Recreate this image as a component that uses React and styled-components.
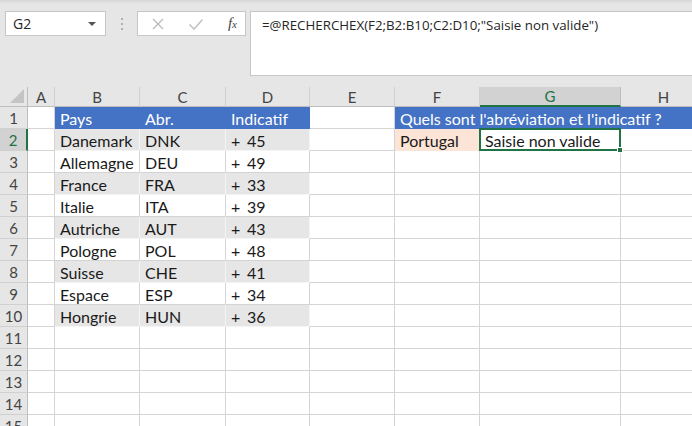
import React from "react";
import styled, { createGlobalStyle } from "styled-components";

const GlobalStyle = createGlobalStyle`
	html, body {
		margin: 0;
		padding: 0;
		width: 692px;
		height: 426px;
		overflow: hidden;
		background: #ffffff;
	}
	* {
		box-sizing: border-box;
	}
`;

const columns = ["A", "B", "C", "D", "E", "F", "G", "H"];
const widths = [28, 27, 85, 86, 84, 85, 85, 141, 86];

const countries = [
	["Danemark", "DNK", "45"],
	["Allemagne", "DEU", "49"],
	["France", "FRA", "33"],
	["Italie", "ITA", "39"],
	["Autriche", "AUT", "43"],
	["Pologne", "POL", "48"],
	["Suisse", "CHE", "41"],
	["Espace", "ESP", "34"],
	["Hongrie", "HUN", "36"],
];

const BLUE = "#4472c4";
const BAND = "#e7e6e6";
const GREEN = "#217346";

function App() {
	const rows = [];

	for (let r = 1; r <= 15; r++) {
		const selectedRow = r === 2;
		rows.push(
			<RowHead key={"h" + r} $active={selectedRow}>
				{r}
			</RowHead>
		);
		// column A
		rows.push(<Cell key={r + "A"} />);

		// B..D : the table
		if (r === 1) {
			rows.push(<Cell key="1B" $fill={BLUE} $line={BLUE} $light>Pays</Cell>);
			rows.push(<Cell key="1C" $fill={BLUE} $line={BLUE} $light>Abr.</Cell>);
			rows.push(<Cell key="1D" $fill={BLUE} $line={BLUE} $light>Indicatif</Cell>);
		} else if (r <= 10) {
			const [pays, abr, code] = countries[r - 2];
			const band = r % 2 === 0;
			const fill = band ? BAND : undefined;
			const line = band ? "#f4f4f4" : undefined;
			rows.push(<Cell key={r + "B"} $fill={fill} $line={line}>{pays}</Cell>);
			rows.push(<Cell key={r + "C"} $fill={fill} $line={line}>{abr}</Cell>);
			rows.push(
				<Cell key={r + "D"} $fill={fill} $line={line}>
					<Plus>+</Plus>
					{code}
				</Cell>
			);
		} else {
			rows.push(<Cell key={r + "B"} />);
			rows.push(<Cell key={r + "C"} />);
			rows.push(<Cell key={r + "D"} />);
		}

		// column E
		rows.push(<Cell key={r + "E"} />);

		// F..H
		if (r === 1) {
			rows.push(
				<Cell key="1F" $fill={BLUE} $line={BLUE} $light $span={3}>
					Quels sont l'abréviation et l'indicatif ?
				</Cell>
			);
		} else if (r === 2) {
			rows.push(<Cell key="2F" $fill="#fce4d6" $line="#fce4d6">Portugal</Cell>);
			rows.push(
				<Selected key="2G">
					Saisie non valide
					<Handle />
				</Selected>
			);
			rows.push(<Cell key="2H" />);
		} else {
			rows.push(<Cell key={r + "F"} />);
			rows.push(<Cell key={r + "G"} />);
			rows.push(<Cell key={r + "H"} />);
		}
	}

	return (
		<>
			<GlobalStyle />
			<Page>
				<Toolbar>
					<NameBox>
						<span>G2</span>
						<Caret />
					</NameBox>
					<Grip>
						<i />
						<i />
						<i />
					</Grip>
					<FuncButtons>
						<svg width="14" height="14" viewBox="0 0 14 14">
							<path
								d="M2 2 L12 12 M12 2 L2 12"
								stroke="#bdbdbd"
								strokeWidth="1.4"
								fill="none"
							/>
						</svg>
						<svg width="16" height="14" viewBox="0 0 16 14">
							<path
								d="M1.5 7.5 L6 12 L14.5 2.5"
								stroke="#c4c4c4"
								strokeWidth="1.6"
								fill="none"
							/>
						</svg>
						<Fx>
							f<sub>x</sub>
						</Fx>
					</FuncButtons>
					<FormulaBox>
						=@RECHERCHEX(F2;B2:B10;C2:D10;"Saisie non valide")
					</FormulaBox>
				</Toolbar>

				<Sheet $cols={widths}>
					<Corner>
						<svg width="14" height="14" viewBox="0 0 14 14">
							<path d="M14 0 L14 14 L0 14 Z" fill="#c4c4c4" />
						</svg>
					</Corner>
					{columns.map((c) => (
						<ColHead key={c} $active={c === "G"}>
							{c}
						</ColHead>
					))}
					{rows}
				</Sheet>
			</Page>
		</>
	);
}

export default App;

// Styled Components

const Page = styled.div`
	width: 692px;
	height: 426px;
	overflow: hidden;
	display: flex;
	flex-direction: column;
	background: #ffffff;
`;

const Toolbar = styled.div`
	display: flex;
	flex-shrink: 0;
	align-items: flex-start;
	height: 87px;
	padding: 11px 0 0 5px;
	background: linear-gradient(#d6d6d6 0px, #e6e6e6 4px, #e6e6e6 100%);
`;

const NameBox = styled.div`
	display: flex;
	align-items: center;
	justify-content: space-between;
	width: 101px;
	height: 25px;
	padding: 0 9px 0 7px;
	background: #ffffff;
	border: 1px solid #c6c6c6;
	font-family: "Open Sans", "Noto Sans", sans-serif;
	font-size: 14px;
	color: #262626;
`;

const Caret = styled.i`
	width: 0;
	height: 0;
	border-left: 4px solid transparent;
	border-right: 4px solid transparent;
	border-top: 4px solid #555555;
`;

const Grip = styled.div`
	display: flex;
	flex-direction: column;
	align-items: center;
	justify-content: center;
	gap: 3px;
	width: 31px;
	height: 25px;

	i {
		width: 2px;
		height: 2px;
		background: #b0b0b0;
	}
`;

const FuncButtons = styled.div`
	display: flex;
	align-items: center;
	justify-content: space-between;
	width: 109px;
	height: 25px;
	padding: 0 8px 0 13px;
	background: #ffffff;
	border: 1px solid #c6c6c6;
`;

const Fx = styled.span`
	font-family: "Liberation Serif", "DejaVu Serif", serif;
	font-style: italic;
	font-size: 15px;
	color: #444444;
	line-height: 1;

	sub {
		font-size: 11px;
		vertical-align: 0;
	}
`;

const FormulaBox = styled.div`
	flex: 1;
	height: 65px;
	margin-left: 4px;
	margin-right: -2px;
	padding: 4px 11px;
	background: #ffffff;
	border: 1px solid #c6c6c6;
	font-family: "Open Sans", "Noto Sans", sans-serif;
	font-size: 13.3px;
	color: #262626;
	white-space: nowrap;
`;

const Sheet = styled.div`
	display: grid;
	flex-shrink: 0;
	grid-template-columns: ${(p) => p.$cols.map((w) => w + "px").join(" ")};
	grid-template-rows: 20px;
	grid-auto-rows: 22px;
	font-family: "Lato", "Open Sans", sans-serif;
	font-size: 16px;
`;

const Corner = styled.div`
	display: flex;
	align-items: flex-end;
	justify-content: flex-end;
	padding: 0 3px 3px 0;
	background: #e6e6e6;
	border-right: 1px solid #bdbdbd;
	border-bottom: 1px solid #bdbdbd;
`;

const ColHead = styled.div`
	display: flex;
	align-items: center;
	justify-content: center;
	background: ${(p) => (p.$active ? "#d2d2d2" : "#e6e6e6")};
	border-right: 1px solid ${(p) => (p.$active ? "#bdbdbd" : "#d0d0d0")};
	border-bottom: ${(p) => (p.$active ? `2px solid ${GREEN}` : "1px solid #bdbdbd")};
	color: ${(p) => (p.$active ? GREEN : "#444444")};
	font-family: "Lato", "Open Sans", sans-serif;
	font-size: 15px;
`;

const RowHead = styled.div`
	display: flex;
	align-items: center;
	justify-content: center;
	background: ${(p) => (p.$active ? "#d2d2d2" : "#e6e6e6")};
	border-right: ${(p) => (p.$active ? `2px solid ${GREEN}` : "1px solid #bdbdbd")};
	border-bottom: 1px solid #d0d0d0;
	color: ${(p) => (p.$active ? GREEN : "#444444")};
	font-size: 15px;
`;

const Cell = styled.div`
	grid-column: span ${(p) => p.$span || 1};
	display: flex;
	align-items: center;
	padding: 1px 0 0 5px;
	white-space: nowrap;
	overflow: hidden;
	background: ${(p) => p.$fill || "#ffffff"};
	border-right: 1px solid ${(p) => p.$line || "#d4d4d4"};
	border-bottom: 1px solid ${(p) => p.$line || "#d4d4d4"};
	color: ${(p) => (p.$light ? "#ffffff" : "#1a1a1a")};
`;

const Plus = styled.span`
	width: 16px;
`;

const Selected = styled.div`
	position: relative;
	display: flex;
	align-items: center;
	padding: 1px 0 0 4px;
	margin: -1px 0 0 -1px;
	border: 2px solid ${GREEN};
	background: #ffffff;
	color: #1a1a1a;
	white-space: nowrap;
`;

const Handle = styled.i`
	position: absolute;
	right: -4px;
	bottom: -4px;
	width: 6px;
	height: 6px;
	background: ${GREEN};
	border: 1px solid #ffffff;
`;
